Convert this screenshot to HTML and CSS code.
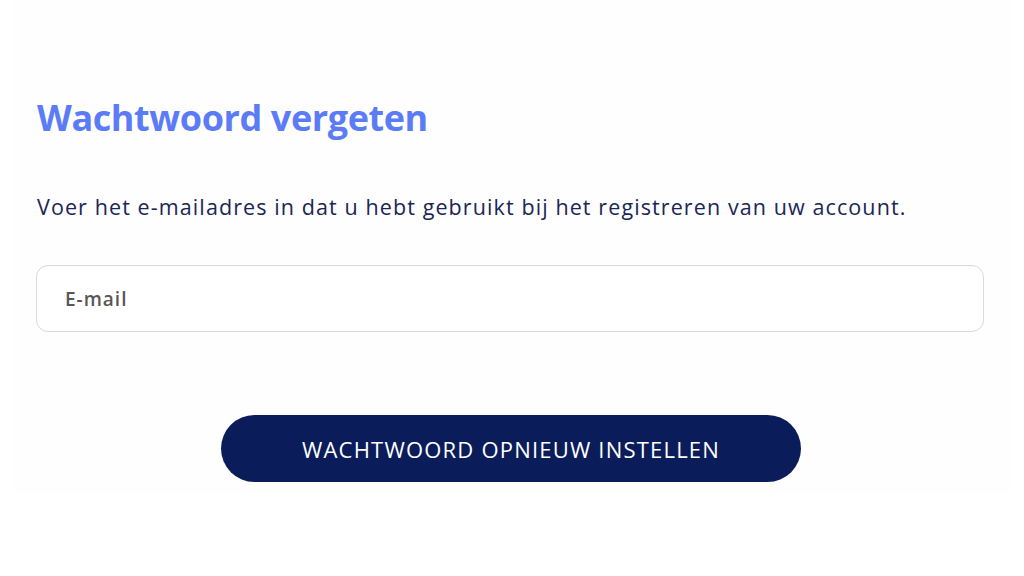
FILE: index.html
```html
<!DOCTYPE html>
<html lang="nl">
<head>
    <meta charset="UTF-8">
    <meta name="viewport" content="width=device-width, initial-scale=1.0">
    <title>Wachtwoord vergeten</title>
    <link rel="stylesheet" href="styles.css">
</head>
<body>
    <div class="reset-panel">
        <h1 class="reset-title">Wachtwoord vergeten</h1>
        <p class="reset-intro">Voer het e-mailadres in dat u hebt gebruikt bij het registreren van uw account.</p>

        <form class="reset-form" onsubmit="return false;">
            <input class="reset-input" type="email" name="email" placeholder="E-mail">
            <div class="reset-actions">
                <button class="reset-btn" type="submit">WACHTWOORD OPNIEUW INSTELLEN</button>
            </div>
        </form>
    </div>
</body>
</html>
```

FILE: styles.css
```css
body {
    font-family: 'Open Sans', 'Noto Sans', sans-serif;
    background: #ffffff;
    margin: 0;
    padding: 0;
    min-height: 100vh;
}

.reset-panel {
    margin: 0 14px;
    padding: 94px 25px 12px 23px;
    background: #fefefe;
}

.reset-title {
    margin: 0 0 50px 0;
    color: #5b7cf6;
    font-size: 36px;
    font-weight: 700;
    letter-spacing: -0.4px;
    line-height: 48px;
}

.reset-intro {
    margin: 0 0 43px 0;
    color: #1b2556;
    font-size: 21.5px;
    letter-spacing: 1.1px;
    line-height: 30px;
}

.reset-input {
    display: block;
    box-sizing: border-box;
    width: 100%;
    height: 67px;
    margin-left: -1px;
    padding: 0 28px;
    border: 1px solid #d9d9db;
    border-radius: 12px;
    background: #ffffff;
    font-family: inherit;
    font-size: 19px;
    letter-spacing: 1px;
    color: #333;
    outline: none;
}

.reset-input::placeholder {
    color: #575757;
    font-weight: 600;
}

.reset-actions {
    display: flex;
    justify-content: center;
    margin-top: 83px;
}

.reset-btn {
    width: 580px;
    height: 67px;
    border: none;
    border-radius: 34px;
    background: #0b1c5b;
    color: #ffffff;
    font-family: inherit;
    font-size: 22px;
    letter-spacing: 1.2px;
    cursor: pointer;
}
```
